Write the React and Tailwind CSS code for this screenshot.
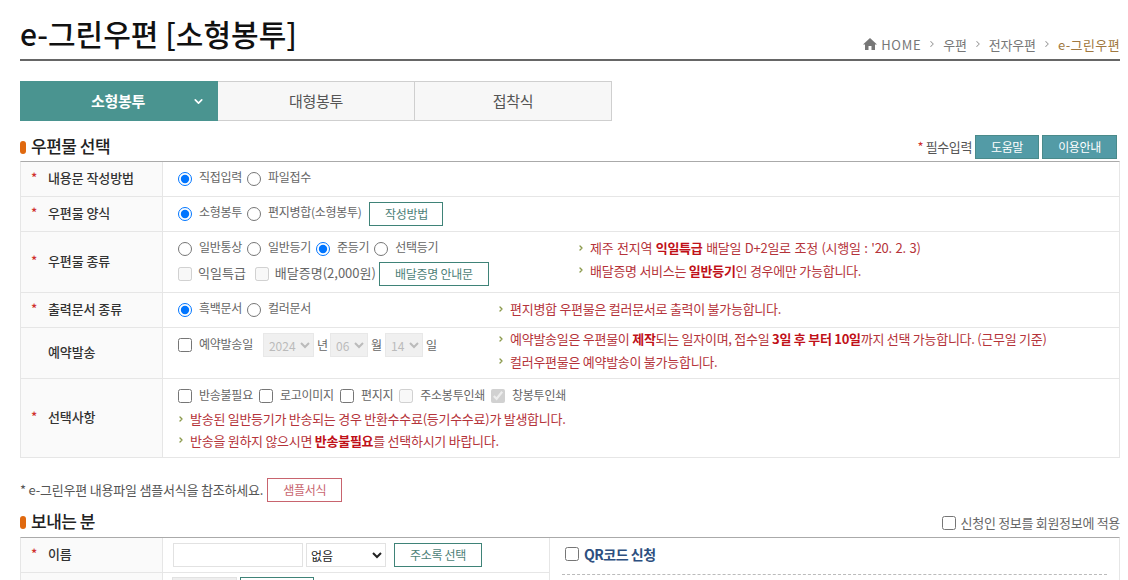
import React from 'react';
import { ChevronDown, ChevronRight } from 'lucide-react';

const Radio = ({ label, checked, name }) => (
  <label className="flex items-center">
    <input type="radio" name={name} defaultChecked={checked} className="w-[14px] h-[14px] m-0" />
    <span className="ml-[7px] mr-[5px] -mt-[5px] text-[12px] tracking-[-0.3px] text-[#666]">{label}</span>
  </label>
);

const Check = ({ label, checked, disabled, big }) => (
  <label className="flex items-center">
    <input type="checkbox" defaultChecked={checked} disabled={disabled} className="w-[14px] h-[14px] m-0" />
    <span className={`-mt-[3px] text-[#666] ${big ? 'ml-[6px] mr-[5px] text-[13px] tracking-[0px]' : 'ml-[7px] mr-[6px] text-[12px] tracking-[-0.25px]'}`}>{label}</span>
  </label>
);

const GreenBtn = ({ children, className }) => (
  <button className={`h-[24px] border border-[#3f8378] bg-white text-[12px] tracking-[-0.3px] text-[#4d7f78] ${className}`}>{children}</button>
);

const Note = ({ children, className }) => (
  <p className={`flex items-center text-[13px] tracking-[-0.27px] text-[#b5333a] [&_b]:text-[#c01018] ${className}`}>
    <ChevronRight size={8} strokeWidth={4} className="mr-[5px] text-[#8b9a4c]" />
    <span>{children}</span>
  </p>
);

const Row = ({ label, required = true, className, children }) => (
  <div className={`grid grid-cols-[142px_1fr] border-b border-[#e6e6e6] ${className}`}>
    <div className="flex items-center bg-[#fafafa] border-r border-[#e6e6e6] pl-[10px] pb-[2px] text-[13px] font-medium tracking-[-0.1px] text-[#333]">
      <span className="w-[17px] text-[#d0312d]">{required ? '*' : ''}</span>
      <span>{label}</span>
    </div>
    {children}
  </div>
);

const SectionTitle = ({ children, right }) => (
  <div className="flex items-start justify-between">
    <h3 className="flex items-center text-[17px] leading-[22px] font-medium tracking-[-0.5px] text-[#222]">
      <span className="w-[6px] h-[13px] mt-[2px] rounded-full bg-[#e0690f] mr-[5px]" />
      {children}
    </h3>
    {right}
  </div>
);

const Sel = ({ children, w }) => (
  <select disabled className={`h-[24px] ${w} border border-[#e8e8e8] bg-[#f0f0f0] pl-[1px] text-[12px] text-[#bbb]`}>
    <option>{children}</option>
  </select>
);

const Crumb = () => <ChevronRight size={10} strokeWidth={2.5} className="mx-[6px] text-[#999]" />;

export default function App() {
  return (
    <div className="h-[580px] overflow-hidden bg-white pl-5 pr-2 font-['Noto_Sans_CJK_KR','Liberation_Sans',sans-serif]">
      <header className="flex items-end justify-between h-[61px] border-b-2 border-[#666] pb-[2px]">
        <h2 className="text-[30px] leading-[40px] font-medium tracking-[0px] text-[#111] mb-[4px]">e-그린우편 [소형봉투]</h2>
        <div className="flex items-center text-[13px] tracking-[-0.2px] text-[#777] mb-[3px]">
          <svg width="14" height="12" viewBox="0 0 14 12" className="mr-[4px] fill-[#777]">
            <path d="M7 0 L14 6.5 H12 V12 H8.5 V8 H5.5 V12 H2 V6.5 H0 Z" />
          </svg>
          <span className="tracking-[0.7px]">HOME</span><Crumb />우편<Crumb />전자우편<Crumb /><span className="tracking-[0.4px] text-[#a07840]">e-그린우편</span>
        </div>
      </header>

      <nav className="flex w-[592px] h-[40px] mt-[20px]">
        <div className="relative flex items-center justify-center w-[198px] bg-[#4a9490] pr-[2px] text-[15px] font-bold tracking-[-0.3px] text-white">
          소형봉투
          <ChevronDown size={13} strokeWidth={3} className="absolute right-[13px]" />
        </div>
        <div className="flex items-center justify-center w-[197px] bg-[#f7f7f7] border border-l-0 border-[#cfcfcf] text-[15px] tracking-[-0.3px] text-[#555]">대형봉투</div>
        <div className="flex items-center justify-center w-[197px] bg-[#f7f7f7] border border-l-0 border-[#cfcfcf] text-[15px] tracking-[-0.3px] text-[#555]">접착식</div>
      </nav>

      <div className="mt-[14px] h-[26px]">
        <SectionTitle
          right={
            <div className="flex items-center mr-[3px]">
              <span className="text-[13px] tracking-[-0.4px] text-[#555] mr-[3px]"><span className="text-[#d0312d]">*</span> 필수입력</span>
              <button className="w-[64px] h-[24px] bg-[#539ba6] border border-[#4a8a8a] text-[12px] tracking-[-0.4px] text-white mr-[3px]">도움말</button>
              <button className="w-[75px] h-[24px] bg-[#539ba6] border border-[#4a8a8a] text-[12px] tracking-[-0.4px] text-white">이용안내</button>
            </div>
          }
        >
          우편물 선택
        </SectionTitle>
      </div>

      <section className="border-t border-t-[#aaa] border-x border-x-[#e6e6e6]">
        <Row label="내용문 작성방법" className="h-[35px]">
          <div className="flex items-center pl-[15px]">
            <Radio name="a" label="직접입력" checked />
            <Radio name="a" label="파일접수" />
          </div>
        </Row>
        <Row label="우편물 양식" className="h-[35px]">
          <div className="flex items-center pl-[15px]">
            <Radio name="b" label="소형봉투" checked />
            <Radio name="b" label="편지병합(소형봉투)" />
            <GreenBtn className="w-[74px] ml-[3px]">작성방법</GreenBtn>
          </div>
        </Row>
        <Row label="우편물 종류" className="h-[61px]">
          <div className="flex pl-[15px]">
            <div className="w-[399px] pt-[7px]">
              <div className="flex items-center h-[20px]">
                <Radio name="c" label="일반통상" />
                <Radio name="c" label="일반등기" />
                <Radio name="c" label="준등기" checked />
                <Radio name="c" label="선택등기" />
              </div>
              <div className="flex items-center mt-[3px]">
                <Check label="익일특급" disabled big />
                <span className="w-[4px]" />
                <Check label="배달증명(2,000원)" disabled big />
                <GreenBtn className="w-[110px] -ml-[2px]">배달증명 안내문</GreenBtn>
              </div>
            </div>
            <div className="pt-[6px] space-y-[3px]">
              <Note className="[word-spacing:1px]">제주 전지역 <b>익일특급</b> 배달일 D+2일로 조정 (시행일 : '20. 2. 3)</Note>
              <Note>배달증명 서비스는 <b>일반등기</b>인 경우에만 가능합니다.</Note>
            </div>
          </div>
        </Row>
        <Row label="출력문서 종류" className="h-[35px]">
          <div className="flex items-center pl-[15px]">
            <div className="flex w-[319px]">
              <Radio name="d" label="흑백문서" checked />
              <Radio name="d" label="컬러문서" />
            </div>
            <Note className="-mt-[2px]">편지병합 우편물은 컬러문서로 출력이 불가능합니다.</Note>
          </div>
        </Row>
        <Row label="예약발송" required={false} className="h-[51px]">
          <div className="flex pl-[15px]">
            <div className="flex items-center w-[319px] h-[34px]">
              <Check label="예약발송일" />
              <span className="w-[4px]" />
              <Sel w="w-[51px]">2024</Sel>
              <span className="ml-[3px] mr-[2px] text-[12px] text-[#666]">년</span>
              <Sel w="w-[38px]">06</Sel>
              <span className="mx-[3px] text-[12px] text-[#666]">월</span>
              <Sel w="w-[38px]">14</Sel>
              <span className="ml-[3px] text-[12px] text-[#666]">일</span>
            </div>
            <div className="pt-[1px] space-y-[3px]">
              <Note>예약발송일은 우편물이 <b>제작</b>되는 일자이며, 접수일 <b>3일 후 부터 10일</b>까지 선택 가능합니다. (근무일 기준)</Note>
              <Note>컬러우편물은 예약발송이 불가능합니다.</Note>
            </div>
          </div>
        </Row>
        <Row label="선택사항" className="h-[79px]">
          <div className="pl-[15px] pt-[7px]">
            <div className="flex items-center h-[20px]">
              <Check label="반송불필요" />
              <Check label="로고이미지" />
              <Check label="편지지" />
              <Check label="주소봉투인쇄" disabled />
              <Check label="창봉투인쇄" disabled checked />
            </div>
            <div className="mt-[3px] space-y-[2px]">
              <Note className="-ml-[1px]">발송된 일반등기가 반송되는 경우 반환수수료(등기수수료)가 발생합니다.</Note>
              <Note className="-ml-[1px]">반송을 원하지 않으시면 <b>반송불필요</b>를 선택하시기 바랍니다.</Note>
            </div>
          </div>
        </Row>
      </section>

      <div className="flex items-center mt-[20px] h-[24px]">
        <span className="text-[13px] tracking-[-0.2px] text-[#555]">* e-그린우편 내용파일 샘플서식을 참조하세요.</span>
        <button className="w-[75px] h-[24px] ml-[4px] border border-[#c8646e] bg-white text-[12px] tracking-[-0.3px] text-[#c8646e]">샘플서식</button>
      </div>

      <div className="mt-[8px] h-[26px]">
        <SectionTitle
          right={
            <label className="flex items-center mt-[3px]">
              <input type="checkbox" className="w-[14px] h-[14px] m-0" />
              <span className="ml-[5px] text-[13px] tracking-[-0.3px] text-[#666]">신청인 정보를 회원정보에 적용</span>
            </label>
          }
        >
          보내는 분
        </SectionTitle>
      </div>

      <section className="grid grid-cols-[528px_1fr] mt-[1px] border-t border-t-[#aaa] border-x border-x-[#e6e6e6]">
        <div>
          <Row label="이름" className="h-[35px]">
            <div className="flex items-center pl-[10px]">
              <input className="w-[130px] h-[24px] border border-[#e2e2e2] bg-white" />
              <select className="w-[80px] h-[24px] ml-[3px] border border-[#e2e2e2] bg-white text-[12px] text-[#222]">
                <option>없음</option>
              </select>
              <GreenBtn className="w-[88px] ml-[8px]">주소록 선택</GreenBtn>
            </div>
          </Row>
          <Row required={false} label="" className="h-[40px]">
            <div className="flex items-start pl-[9px] pt-[4px]">
              <input disabled className="w-[65px] h-[24px] border border-[#e2e2e2] bg-[#eee]" />
              <GreenBtn className="w-[74px] ml-[3px]" />
            </div>
          </Row>
        </div>
        <div className="border-l border-[#e6e6e6] px-[12px]">
          <div className="flex items-center h-[37px] pl-[3px] pb-[4px] border-b border-dashed border-[#bbb]">
            <input type="checkbox" className="w-[14px] h-[14px] m-0" />
            <span className="ml-[5px] text-[14px] font-bold tracking-[-0.5px] text-[#2d4f80]">QR코드 신청</span>
          </div>
        </div>
      </section>
    </div>
  );
}
